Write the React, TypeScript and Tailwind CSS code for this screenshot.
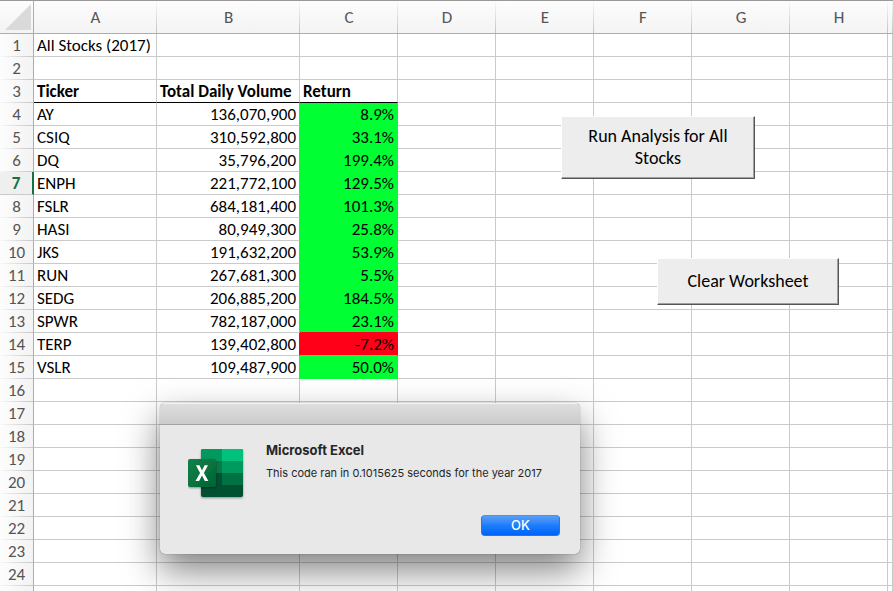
const columns = ["A", "B", "C", "D", "E", "F", "G", "H", ""];

const widths = [
  "w-[123px]",
  "w-[143px]",
  "w-[98px]",
  "w-[98px]",
  "w-[98px]",
  "w-[98px]",
  "w-[98px]",
  "w-[98px]",
  "",
];

const stocks: [string, string, string][] = [
  ["AY", "136,070,900", "8.9%"],
  ["CSIQ", "310,592,800", "33.1%"],
  ["DQ", "35,796,200", "199.4%"],
  ["ENPH", "221,772,100", "129.5%"],
  ["FSLR", "684,181,400", "101.3%"],
  ["HASI", "80,949,300", "25.8%"],
  ["JKS", "191,632,200", "53.9%"],
  ["RUN", "267,681,300", "5.5%"],
  ["SEDG", "206,885,200", "184.5%"],
  ["SPWR", "782,187,000", "23.1%"],
  ["TERP", "139,402,800", "-7.2%"],
  ["VSLR", "109,487,900", "50.0%"],
];

const NUMBERED_ROWS = 24;
const ACTIVE_ROW = 7;

function cellText(row: number, col: number): string {
  if (row === 1) return col === 0 ? "All Stocks (2017)" : "";
  if (row === 3) return ["Ticker", "Total Daily Volume", "Return"][col] ?? "";
  return stocks[row - 4]?.[col] ?? "";
}

function cellStyle(row: number, col: number): string {
  const isStock = row >= 4 && row <= 15;
  const isNegative = (r: number) => Boolean(stocks[r - 4]?.[2].startsWith("-"));
  const fill = isNegative(row) ? "bg-[#ff0018]" : "bg-[#00ff33]";
  const edge = isNegative(row) ? "border-r-[#ff0018]" : "border-r-[#00ff33]";
  const under = isNegative(row + 1) ? "border-b-[#ff0018]" : "border-b-[#00ff33]";

  if (row === 3 && col < 3) return "border-r-[#cacaca] border-b-black text-left font-bold";
  if (isStock && col === 1) return `${edge} border-b-[#cacaca] text-right`;
  if (isStock && col === 2) return `${fill} ${edge} ${under} text-right`;
  return "border-r-[#cacaca] border-b-[#cacaca] text-left";
}

function Sheet() {
  return (
    <table className="w-full table-fixed border-separate border-spacing-0 border-t border-[#999999] bg-white text-[17px] leading-5 text-black">
      <colgroup>
        <col className="w-[34px]" />
        {widths.map((width, i) => (
          <col key={i} className={width} />
        ))}
      </colgroup>
      <thead>
        <tr className="h-[33px] bg-linear-to-b from-[#fdfdfd] to-[#f3f3f3]">
          <td className="border-r border-b border-[#adadad] p-0">
            <svg className="ml-[5px] block h-[26px] w-[26px]" viewBox="0 0 26 26" aria-hidden="true">
              <path d="M26 0V26H0Z" fill="#dadada" />
            </svg>
          </td>
          {columns.map((name, i) => (
            <th
              key={i}
              scope="col"
              className="border-b border-[#adadad] bg-[linear-gradient(to_bottom,#f8f8f8,#c4c4c4)] bg-[length:1px_100%] bg-right bg-no-repeat px-0 pt-0.5 pb-0 font-normal text-[#555555]"
            >
              {name}
            </th>
          ))}
        </tr>
      </thead>
      <tbody>
        {Array.from({ length: NUMBERED_ROWS + 1 }, (_, i) => i + 1).map((row) => (
          <tr key={row} className="h-[23px]">
            <th
              scope="row"
              className={
                row === ACTIVE_ROW
                  ? "border-r-2 border-b border-r-[#107147] border-b-[#cacaca] bg-[#efefef] px-0 pt-0.5 pb-0 font-bold text-[#107147]"
                  : "border-r border-b border-r-[#adadad] border-b-transparent bg-[linear-gradient(to_right,#f8f8f8,#c4c4c4),linear-gradient(to_right,#fdfdfd,#f3f3f3)] bg-[length:100%_1px,100%_100%] bg-bottom bg-no-repeat bg-origin-border px-0 pt-0.5 pb-0 font-normal text-[#555555]"
              }
            >
              {row <= NUMBERED_ROWS ? row : ""}
            </th>
            {columns.map((_, col) => (
              <td
                key={col}
                className={`overflow-hidden border-r border-b px-[3px] pt-0.5 pb-0 whitespace-nowrap ${cellStyle(row, col)}`}
              >
                {cellText(row, col)}
              </td>
            ))}
          </tr>
        ))}
      </tbody>
    </table>
  );
}

function ExcelIcon() {
  return (
    <svg className="block h-[54px] w-[60px] shrink-0" viewBox="0 0 60 54" role="img" aria-label="Excel">
      <defs>
        <linearGradient id="badge" x1="0" y1="0" x2="1" y2="1">
          <stop offset="0" stopColor="#11824c" />
          <stop offset="1" stopColor="#006332" />
        </linearGradient>
        <filter id="soft" x="-20%" y="-20%" width="140%" height="150%">
          <feDropShadow dx="0" dy="1" stdDeviation="1" floodOpacity="0.4" />
        </filter>
        <clipPath id="book">
          <rect x="13" y="0" width="42" height="48" rx="2" />
        </clipPath>
      </defs>
      <g filter="url(#soft)">
        <g clipPath="url(#book)">
          <rect x="13" y="0" width="42" height="48" fill="#045130" />
          <rect x="13" y="0" width="21" height="12" fill="#049a5f" />
          <rect x="34" y="0" width="21" height="12" fill="#00c27b" />
          <rect x="13" y="12" width="21" height="12" fill="#08774a" />
          <rect x="34" y="12" width="21" height="12" fill="#049a5f" />
          <rect x="34" y="24" width="21" height="12" fill="#04713f" />
        </g>
      </g>
      <rect x="0" y="10" width="28" height="28" rx="2" fill="url(#badge)" filter="url(#soft)" />
      <path
        d="M7.5 32L12.1 24L7.9 16.3H11.5L14 21.4L16.6 16.3H20L15.9 24L20.4 32H16.8L14 26.6L11.1 32Z"
        fill="#ffffff"
      />
    </svg>
  );
}

function MessageBox() {
  return (
    <div
      role="dialog"
      aria-labelledby="message-title"
      className="absolute top-[403px] left-[160px] w-[420px] overflow-hidden rounded-[5px] bg-[#e8e8e8] font-['Inter',sans-serif] text-[#262626] shadow-[0_0_1px_rgba(0,0,0,0.6),0_16px_36px_rgba(0,0,0,0.5)]"
    >
      <div className="h-[22px] border-t border-b border-t-[#f4f4f4] border-b-[#a3a3a3] bg-linear-to-b from-[#dedede] to-[#cbcbcb]" />
      <div className="flex items-start gap-[18px] px-7 pt-4">
        <div className="pt-2">
          <ExcelIcon />
        </div>
        <div className="whitespace-nowrap">
          <h1 id="message-title" className="text-[13px] leading-[18px] font-bold">
            Microsoft Excel
          </h1>
          <p className="mt-1.5 text-[11px] leading-4">
            This code ran in 0.1015625 seconds for the year 2017
          </p>
        </div>
      </div>
      <div className="flex justify-end px-5 pt-3 pb-[18px]">
        <button
          type="button"
          className="h-[21px] w-[79px] rounded-[4px] border border-[#2573ef] border-t-[#4a91f5] bg-linear-to-b from-[#589df8] via-[#1b7dfa] to-[#0062f9] text-[13px] leading-[19px] font-medium text-white"
        >
          OK
        </button>
      </div>
    </div>
  );
}

const macroButton =
  "absolute border border-t-white border-l-white border-r-[#555555] border-b-[#555555] bg-[#ededed] pb-0.5 text-center text-[18px] leading-[22px] text-black shadow-[inset_-1px_-1px_0_#a0a0a0]";

export default function App() {
  return (
    <main className="relative h-screen overflow-hidden bg-white font-['Carlito','Calibri','Lato',sans-serif]">
      <Sheet />
      <button type="button" className={`${macroButton} top-[116px] left-[561px] h-[63px] w-[194px] px-5`}>
        Run Analysis for All Stocks
      </button>
      <button type="button" className={`${macroButton} top-[258px] left-[657px] h-[47px] w-[182px]`}>
        Clear Worksheet
      </button>
      <MessageBox />
    </main>
  );
}
